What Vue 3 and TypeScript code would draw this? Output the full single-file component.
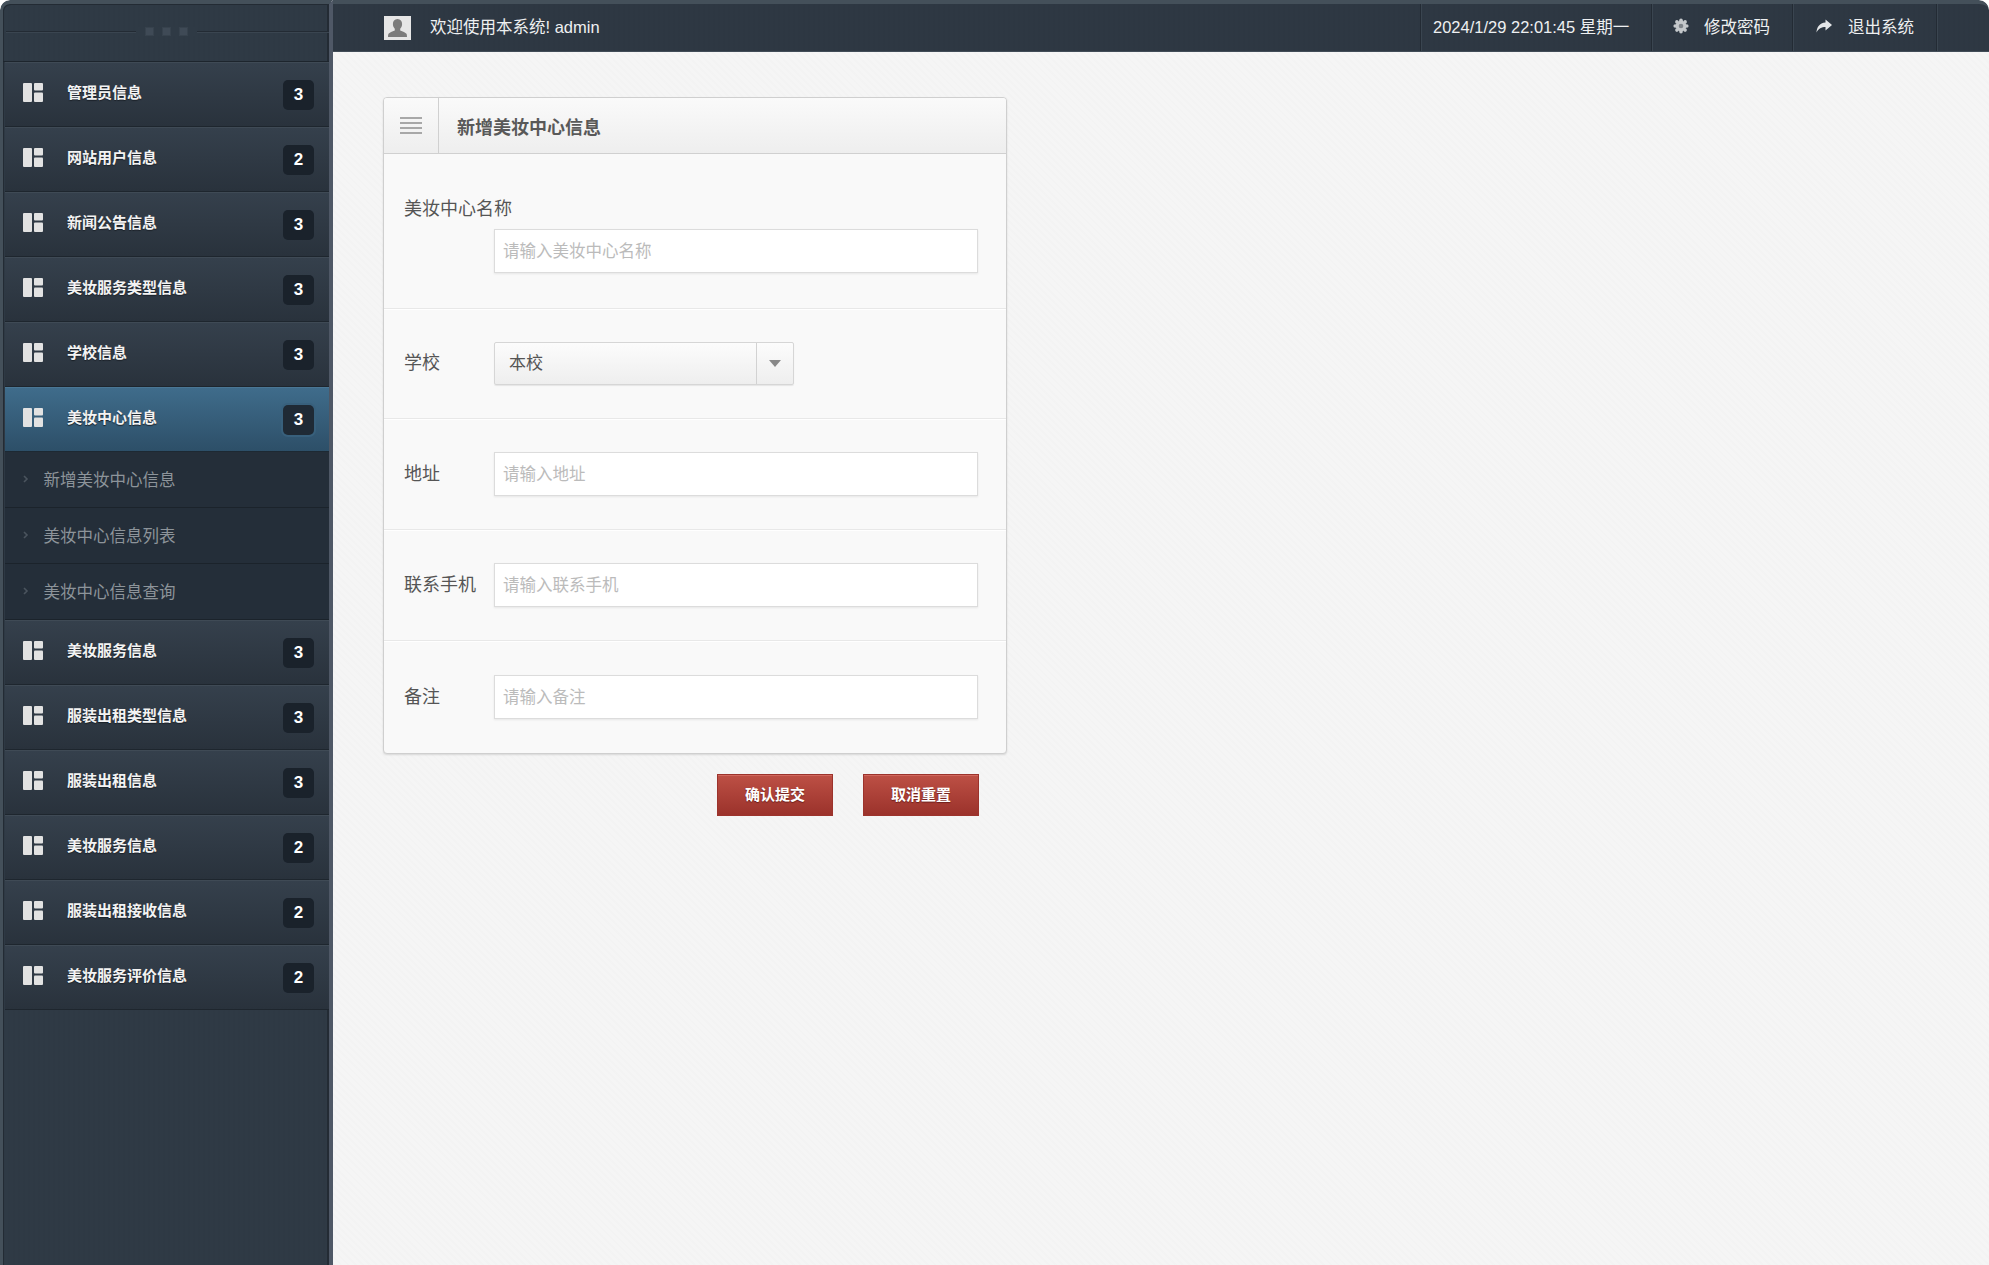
<script setup lang="ts">
interface SubItem {
  label: string
}

interface MenuItem {
  label: string
  count: number
  active?: boolean
  children?: SubItem[]
}

const menu: MenuItem[] = [
  { label: '管理员信息', count: 3 },
  { label: '网站用户信息', count: 2 },
  { label: '新闻公告信息', count: 3 },
  { label: '美妆服务类型信息', count: 3 },
  { label: '学校信息', count: 3 },
  {
    label: '美妆中心信息',
    count: 3,
    active: true,
    children: [{ label: '新增美妆中心信息' }, { label: '美妆中心信息列表' }, { label: '美妆中心信息查询' }],
  },
  { label: '美妆服务信息', count: 3 },
  { label: '服装出租类型信息', count: 3 },
  { label: '服装出租信息', count: 3 },
  { label: '美妆服务信息', count: 2 },
  { label: '服装出租接收信息', count: 2 },
  { label: '美妆服务评价信息', count: 2 },
]

const fields = [
  { label: '地址', placeholder: '请输入地址' },
  { label: '联系手机', placeholder: '请输入联系手机' },
  { label: '备注', placeholder: '请输入备注' },
]
</script>

<template>
  <div class="page">
    <aside class="sidebar">
      <div class="side-head">
        <div class="grip"><i></i><i></i><i></i></div>
      </div>
      <ul class="nav">
        <li v-for="(item, i) in menu" :key="i">
          <div class="nav-item" :class="{ active: item.active }">
            <svg class="nav-icon" viewBox="0 0 20 19" width="20" height="19">
              <rect x="0" y="0" width="9" height="19" rx="1" />
              <rect x="11" y="0" width="9" height="7.5" rx="1" />
              <rect x="11" y="9.5" width="9" height="9.5" rx="1" />
            </svg>
            <span class="nav-label">{{ item.label }}</span>
            <span class="badge">{{ item.count }}</span>
          </div>
          <ul v-if="item.children" class="sub">
            <li v-for="sub in item.children" :key="sub.label" class="sub-item">
              <svg class="chev" viewBox="0 0 6 8" width="6" height="8">
                <path d="M1 1l3 3-3 3" fill="none" stroke="#4a545e" stroke-width="1.6" />
              </svg>
              <span>{{ sub.label }}</span>
            </li>
          </ul>
        </li>
      </ul>
    </aside>

    <div class="main">
      <header class="topbar">
        <div class="avatar">
          <svg viewBox="0 0 27 24" width="27" height="24">
            <path
              d="M13.5 3c-3 0-4.6 2.2-4.6 5 0 2 .8 3.700 1.900 4.700v1.700c-2.500 1.100-5.400 2-6.300 3.400-.4.700-.5 2-.5 3.200h19c0-1.200-.1-2.500-.5-3.200-.9-1.400-3.800-2.300-6.300-3.400v-1.700c1.100-1 1.900-2.700 1.900-4.700 0-2.800-1.600-5-4.600-5z"
              fill="#7b7b7b"
            />
          </svg>
        </div>
        <span class="welcome">欢迎使用本系统! admin</span>
        <div class="top-right">
          <div class="top-cell date">2024/1/29 22:01:45 星期一</div>
          <div class="top-cell pass">
            <svg viewBox="0 0 16 16" width="16" height="16">
              <g fill="#c4c8cb">
                <circle cx="8" cy="8" r="5.400" />
                <circle cx="8" cy="2.200" r="1.800" />
                <circle cx="8" cy="13.800" r="1.800" />
                <circle cx="2.200" cy="8" r="1.800" />
                <circle cx="13.800" cy="8" r="1.800" />
                <circle cx="3.900" cy="3.900" r="1.800" />
                <circle cx="12.100" cy="3.900" r="1.800" />
                <circle cx="3.900" cy="12.100" r="1.800" />
                <circle cx="12.100" cy="12.100" r="1.800" />
              </g>
              <circle cx="8" cy="8" r="2.300" fill="#7d8389" />
            </svg>
            <span>修改密码</span>
          </div>
          <div class="top-cell exit">
            <svg viewBox="0 0 16 14" width="16" height="14">
              <path d="M9.500 0.500L16 6l-6.500 5.500V8C5.500 8 2.500 9.500 0.500 13.500 0.800 8 3.500 4 9.500 3.500z" fill="#e4e6e8" />
            </svg>
            <span>退出系统</span>
          </div>
        </div>
      </header>

      <main class="content">
        <form class="form-wrap" @submit.prevent>
          <section class="panel">
            <div class="panel-head">
              <div class="panel-icon">
                <span></span><span></span><span></span><span></span>
              </div>
              <h3>新增美妆中心信息</h3>
            </div>

            <div class="row row-stack">
              <label>美妆中心名称</label>
              <input class="field indent" type="text" placeholder="请输入美妆中心名称" />
            </div>

            <div class="row row-select">
              <label>学校</label>
              <div class="select">
                <span class="select-value">本校</span>
                <span class="select-arrow"><i></i></span>
              </div>
            </div>

            <div v-for="f in fields" :key="f.label" class="row">
              <label>{{ f.label }}</label>
              <input class="field" type="text" :placeholder="f.placeholder" />
            </div>
          </section>

          <div class="actions">
            <button class="btn" type="submit">确认提交</button>
            <button class="btn" type="reset">取消重置</button>
          </div>
        </form>
      </main>
    </div>
  </div>
</template>

<style>
body {
  margin: 0;
  background: #fff;
}
</style>

<style scoped>
.page {
  display: flex;
  width: 1989px;
  height: 1265px;
  overflow: hidden;
  background: #f5f5f5;
  border-radius: 10px 10px 0 0;
  font-family: "Liberation Sans", "Noto Sans CJK SC", sans-serif;
}

ul {
  margin: 0;
  padding: 0;
  list-style: none;
}

/* sidebar */
.sidebar {
  flex: none;
  width: 326px;
  background: repeating-linear-gradient(90deg, rgba(0, 0, 0, 0.015) 0 2px, transparent 2px 5px), #2f3a45;
  border-left: 3px solid #44505a;
  border-right: 4px solid #4f5866;
  border-top: 4px solid #44505a;
  box-shadow: inset 1px 1px 0 #232b34, inset -2px 0 0 #232b34;
  border-top-left-radius: 10px;
}

.side-head {
  height: 58px;
  box-sizing: border-box;
  border-bottom: 1px solid #1d252d;
  display: flex;
  flex-direction: column;
  justify-content: center;
  position: relative;
}

.side-head::before {
  content: "";
  position: absolute;
  left: 3px;
  right: 0;
  top: 27px;
  border-top: 1px solid #232b34;
  border-bottom: 1px solid #3a4550;
}

.grip {
  position: relative;
  display: flex;
  align-self: center;
  gap: 8px;
  padding: 0 9px;
  margin-top: -3px;
  background: #2f3a45;
}

.grip i {
  width: 9px;
  height: 9px;
  background: #3f4a56;
  box-shadow: inset 0 0 0 1px #37424d;
}

.nav-item {
  height: 65px;
  box-sizing: border-box;
  display: flex;
  align-items: center;
  margin-left: 2px;
  padding: 0 15px 0 18px;
  background: linear-gradient(#35404c, #29323c);
  border-top: 1px solid #3f4a55;
  border-bottom: 1px solid #1e262e;
}

.nav-item.active {
  background: linear-gradient(#3f6c8b, #2d4f68);
  border-top-color: #4a7795;
  border-bottom-color: #1d2933;
}

.nav-icon {
  flex: none;
  fill: #e2e2e2;
  margin-bottom: 4px;
}

.nav-label {
  flex: 1;
  margin-left: 24px;
  margin-bottom: 6px;
  font-size: 15px;
  font-weight: 700;
  color: #f3f3f3;
  text-shadow: 0 1px 1px #1a2027;
}

.badge {
  width: 31px;
  height: 30px;
  line-height: 30px;
  text-align: center;
  border-radius: 5px;
  background: #1a222b;
  color: #fff;
  font-size: 17px;
  font-weight: 700;
}

.active .badge {
  background: #1f2a35;
  box-shadow: 0 0 0 2px #38607c;
}

.sub {
  margin-left: 2px;
  background: #242e39;
}

.sub-item {
  height: 56px;
  box-sizing: border-box;
  display: flex;
  align-items: center;
  padding: 0 0 2px 18px;
  font-size: 16.500px;
  color: #8d949a;
  border-bottom: 1px solid #1b232b;
}

.chev {
  flex: none;
  margin-right: 14.500px;
}

/* top bar */
.main {
  flex: 1;
  min-width: 0;
  display: flex;
  flex-direction: column;
}

.topbar {
  flex: none;
  height: 47px;
  display: flex;
  align-items: center;
  padding-left: 51px;
  background: repeating-linear-gradient(90deg, rgba(0, 0, 0, 0.015) 0 2px, transparent 2px 5px), #2e3843;
  border-top: 4px solid #44505a;
  border-bottom: 1px solid #414c57;
  border-top-right-radius: 10px;
  color: #eef0f1;
  font-size: 16.500px;
}

.avatar {
  flex: none;
  width: 27px;
  height: 24px;
  background: #e6e6e6;
  display: flex;
}

.welcome {
  margin-left: 19px;
  margin-bottom: 3px;
}

.top-right {
  display: flex;
  align-self: stretch;
  margin-left: auto;
  margin-right: 52px;
  border-right: 1px solid #232b34;
  box-shadow: 1px 0 0 #3a4550;
}

.top-cell {
  display: flex;
  align-items: center;
  box-sizing: border-box;
  padding-bottom: 3px;
  border-left: 1px solid #232b34;
  box-shadow: inset 1px 0 0 #3a4550;
}

.date {
  width: 231px;
  padding-left: 12px;
}

.pass {
  width: 141px;
  padding-left: 21px;
  gap: 15px;
}

.exit {
  width: 144px;
  padding-left: 23px;
  gap: 16px;
}

/* form */
.content {
  flex: 1;
  padding: 45px 0 0 50px;
  background: repeating-linear-gradient(45deg, rgba(0, 0, 0, 0.006) 0 2px, transparent 2px 5px), #f5f5f5;
}

.form-wrap {
  width: 624px;
}

.panel {
  background: #f9f9f9;
  border: 1px solid #cfcfcf;
  border-radius: 4px;
  box-shadow: 0 1px 2px rgba(0, 0, 0, 0.12);
  overflow: hidden;
}

.panel-head {
  height: 55px;
  display: flex;
  align-items: center;
  background: linear-gradient(#fafafa, #eeeeee);
  border-bottom: 1px solid #d0d0d0;
}

.panel-icon {
  width: 55px;
  height: 100%;
  box-sizing: border-box;
  display: flex;
  flex-direction: column;
  justify-content: center;
  gap: 3px;
  padding: 0 16px;
  border-right: 1px solid #d0d0d0;
}

.panel-icon span {
  height: 2px;
  background: #a8a8a8;
}

.panel-head h3 {
  margin: 0 0 0 18px;
  font-size: 18px;
  font-weight: 700;
  color: #595959;
}

.row {
  height: 111px;
  box-sizing: border-box;
  display: flex;
  align-items: center;
  padding-left: 20px;
  border-top: 1px solid #e8e8e8;
  box-shadow: inset 0 1px 0 #fff;
}

.row:last-child {
  height: 113px;
}

.row-stack {
  height: 154px;
  display: block;
  padding-top: 42px;
  border-top: 0;
  box-shadow: none;
}

.row-select {
  height: 110px;
}

label {
  flex: none;
  width: 90px;
  margin-bottom: 5px;
  font-size: 18px;
  color: #555;
}

.row-stack label {
  display: block;
  width: auto;
  height: 33px;
  margin-bottom: 0;
  line-height: 27px;
}

.field {
  width: 484px;
  height: 44px;
  box-sizing: border-box;
  padding: 0 8px;
  border: 1px solid #dcdcdc;
  background: #fff;
  box-shadow: 0 1px 2px rgba(0, 0, 0, 0.08);
  font: 16.500px "Liberation Sans", "Noto Sans CJK SC", sans-serif;
  color: #555;
  outline: 0;
}

.field::placeholder {
  color: #bbb;
  opacity: 1;
}

.field.indent {
  display: block;
  margin-left: 90px;
}

.select {
  width: 300px;
  height: 43px;
  box-sizing: border-box;
  display: flex;
  border: 1px solid #d6d6d6;
  border-radius: 2px;
  background: linear-gradient(#fcfcfc, #eeeeee);
  box-shadow: 0 1px 1px rgba(0, 0, 0, 0.08);
}

.select-value {
  flex: 1;
  padding-left: 14px;
  line-height: 41px;
  font-size: 17px;
  color: #555;
}

.select-arrow {
  width: 36px;
  display: flex;
  align-items: center;
  justify-content: center;
  border-left: 1px solid #d2d2d2;
}

.select-arrow i {
  width: 0;
  height: 0;
  border: 6px solid transparent;
  border-top: 7px solid #888;
  border-bottom: 0;
}

.actions {
  display: flex;
  justify-content: flex-end;
  gap: 30px;
  margin: 20px 28px 0 0;
}

.btn {
  width: 116px;
  height: 42px;
  padding: 0 0 3px;
  border: 1px solid #9c332c;
  background: linear-gradient(#bd5045, #9b322b);
  box-shadow: inset 0 1px 0 #d0685d;
  color: #fff;
  font: 700 15px "Liberation Sans", "Noto Sans CJK SC", sans-serif;
  text-shadow: 0 1px 1px #6d1f1a;
}
</style>
